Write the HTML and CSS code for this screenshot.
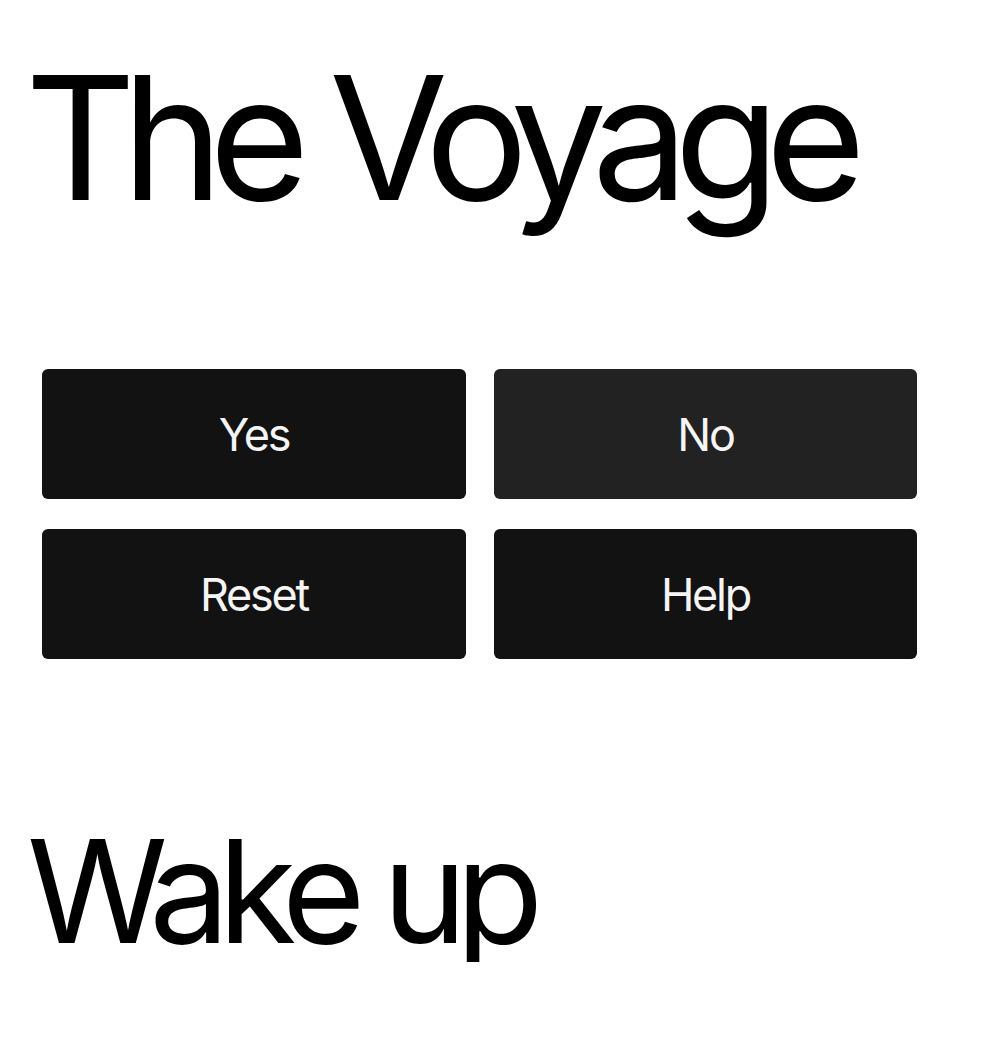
FILE: index.html
```html
<!DOCTYPE html>
<html lang="en">
<head>
<meta charset="utf-8">
<title>The Voyage</title>
<link rel="stylesheet" href="styles.css">
</head>
<body>
<main class="page">
  <h1 class="title">The Voyage</h1>
  <div class="choices">
    <button class="btn">Yes</button>
    <button class="btn btn-alt">No</button>
    <button class="btn">Reset</button>
    <button class="btn">Help</button>
  </div>
  <h2 class="subtitle">Wake up</h2>
</main>
</body>
</html>
```
FILE: styles.css
```css
html, body {
  margin: 0;
  padding: 0;
  background: #ffffff;
}
body {
  font-family: Inter, "Noto Sans", sans-serif;
  color: #000;
}
.page {
  padding: 51px 0 0 29px;
}
.title {
  margin: 0 0 0 -4px;
  font-size: 172px;
  font-weight: 400;
  line-height: 1;
  letter-spacing: -0.083em;
}
.choices {
  display: grid;
  grid-template-columns: 424px 423px;
  column-gap: 28px;
  row-gap: 30px;
  margin: 146px 0 0 13px;
}
.btn {
  height: 130px;
  border: 0;
  border-radius: 6px;
  background: #121212;
  color: #f5f5f5;
  font-family: Inter, "Noto Sans", sans-serif;
  font-size: 45px;
  letter-spacing: -0.05em;
  padding: 0;
}
.btn-alt {
  background: #222222;
}
.subtitle {
  margin: 160px 0 0 -2px;
  font-size: 143px;
  font-weight: 400;
  line-height: 1;
  letter-spacing: -0.08em;
}
```
